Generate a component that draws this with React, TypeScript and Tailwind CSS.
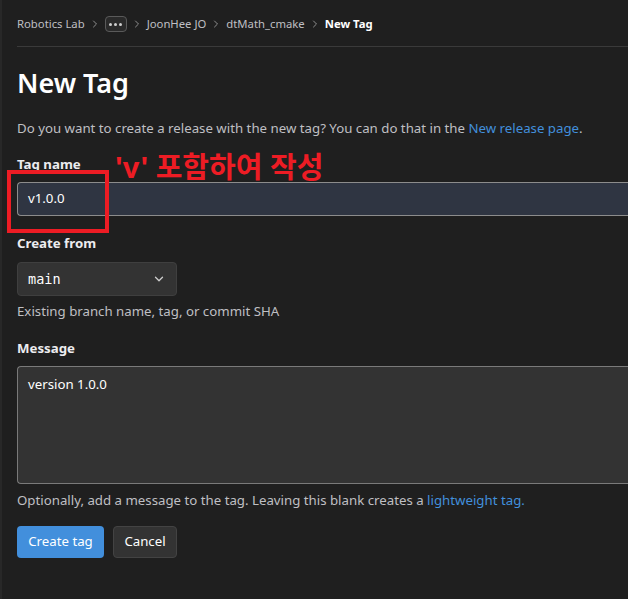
import { ChevronRight, ChevronDown } from "lucide-react";

const crumbs = ["JoonHee JO", "dtMath_cmake"];

const Sep = () => (
  <ChevronRight className="w-3 h-3 mx-[4px] text-[#8f8f8f]" strokeWidth={2} />
);

const App = () => {
  return (
    <div
      className="w-[628px] h-[599px] bg-[#1f1f1f] border-l-2 border-[#282828] overflow-hidden text-[#ececef]"
      style={{ fontFamily: '"Noto Sans", "Noto Sans CJK KR", sans-serif' }}
    >
      <div className="pl-[15px]">
        {/* breadcrumb */}
        <div className="h-[47px] pt-[2px] flex items-center text-[11.3px] text-[#bfbfc3] border-b border-[#3a3a3a]">
          <span>Robotics Lab</span>
          <Sep />
          <span className="w-[22px] h-[16px] rounded-[4px] border border-[#5a5a5a] bg-[#2a2a2a] flex items-center justify-center gap-[2px]">
            <span className="w-[3px] h-[3px] rounded-full bg-[#cfcfcf]" />
            <span className="w-[3px] h-[3px] rounded-full bg-[#cfcfcf]" />
            <span className="w-[3px] h-[3px] rounded-full bg-[#cfcfcf]" />
          </span>
          <Sep />
          <span>{crumbs[0]}</span>
          <Sep />
          <span>{crumbs[1]}</span>
          <Sep />
          <span className="font-bold text-white">New Tag</span>
        </div>

        <h1 className="text-[27px] font-semibold text-white mt-[18px] leading-[36px]">
          New Tag
        </h1>
        <p className="text-[13.25px] text-[#bfbfc3] mt-[17px] leading-[20px]">
          Do you want to create a release with the new tag? You can do that in the{" "}
          <a className="text-[#428fdc]">New release page</a>.
        </p>

        {/* tag name */}
        <div className="relative mt-[16px]">
          <label className="block text-[13.25px] font-bold leading-[20px]">Tag name</label>
          <div className="mt-[8px] h-[34px] bg-[#2f3542] border border-[#8c8c8c] border-r-0 rounded-l-[4px] flex items-center pl-[10px] text-[13.25px] text-white">
            v1.0.0
          </div>
          <div className="absolute left-[-10px] top-[16px] w-[102px] h-[63px] border-4 border-[#ed1c24]" />
          <div className="absolute left-[98px] top-[-5px] text-[29px] font-bold text-[#ed1c24] leading-[36px] whitespace-nowrap">
            'v' 포함하여 작성
          </div>
        </div>

        {/* create from */}
        <label className="block text-[13.25px] font-bold leading-[20px] mt-[17px]">Create from</label>
        <div className="mt-[9px] w-[160px] h-[34px] bg-[#333333] border border-[#3f3f3f] rounded-[4px] flex items-center justify-between pl-[10px] pr-[10px]">
          <span className="text-[13.5px] text-white" style={{ fontFamily: '"DejaVu Sans Mono", monospace' }}>
            main
          </span>
          <ChevronDown className="w-[14px] h-[14px] text-[#cfcfcf]" strokeWidth={2.2} />
        </div>
        <p className="text-[13.25px] text-[#bfbfc3] mt-[5px] leading-[20px]">
          Existing branch name, tag, or commit SHA
        </p>

        {/* message */}
        <label className="block text-[13.25px] font-bold leading-[20px] mt-[17px]">Message</label>
        <div className="mt-[8px] h-[118px] bg-[#333333] border border-[#7a7a7a] border-r-0 rounded-l-[4px] pl-[10px] pt-[7px] text-[13.25px] text-white leading-[20px]">
          version 1.0.0
        </div>
        <p className="text-[13.25px] text-[#bfbfc3] mt-[6px] leading-[20px]">
          Optionally, add a message to the tag. Leaving this blank creates a{" "}
          <a className="text-[#428fdc]">lightweight tag.</a>
        </p>

        {/* buttons */}
        <div className="flex gap-[9px] mt-[16px]">
          <button className="h-[32px] w-[87px] rounded-[4px] bg-[#428fdc] text-white text-[13.25px]">
            Create tag
          </button>
          <button className="h-[32px] w-[64px] rounded-[4px] bg-[#333333] border border-[#434343] text-white text-[13.25px]">
            Cancel
          </button>
        </div>
      </div>
    </div>
  );
};

export default App;
